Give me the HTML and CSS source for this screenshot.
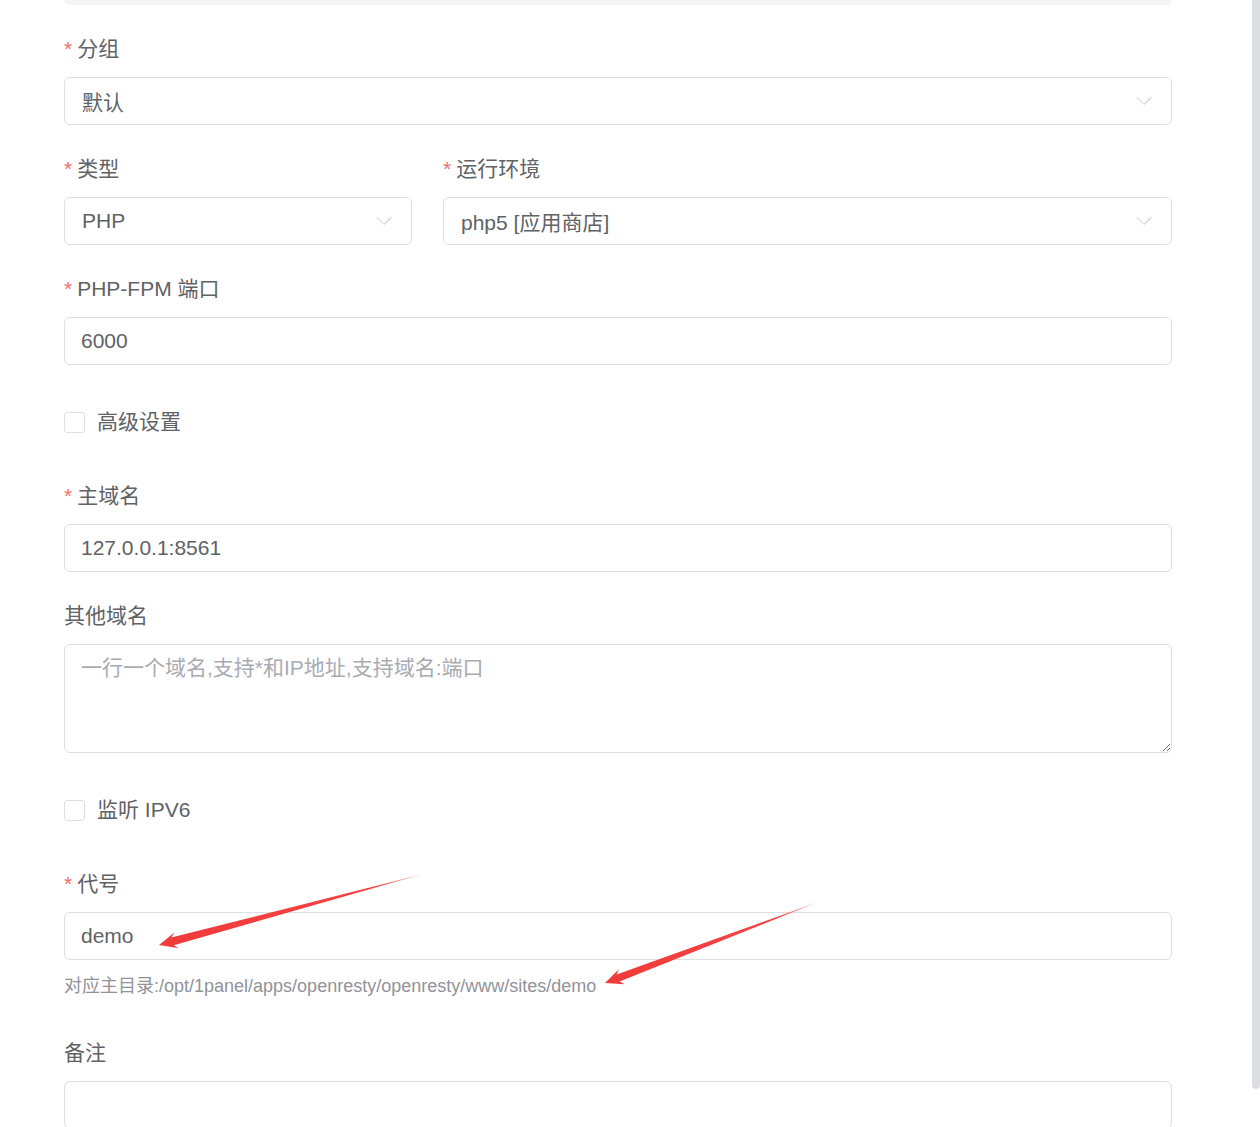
FILE: index.html
```html
<!DOCTYPE html>
<html lang="zh-CN">
<head>
<meta charset="utf-8">
<title>创建网站</title>
<link rel="stylesheet" href="styles.css">
</head>
<body>
<div class="page">
  <form class="form">
    <div class="prev-tail"></div>

    <div class="item">
      <div class="label req">分组</div>
      <div class="select"><span class="value">默认</span>
        <svg class="chev" viewBox="0 0 1024 1024"><path d="M831.872 340.864 512 652.672 192.128 340.864a10.88 10.88 0 0 0-15.104 0 10.24 10.24 0 0 0 0 14.72l329.6 321.28a14.4 14.4 0 0 0 19.84 0l329.6-321.28a10.24 10.24 0 0 0 0-14.72 10.88 10.88 0 0 0-15.104 0z"/></svg>
      </div>
    </div>

    <div class="row">
      <div class="item col-type">
        <div class="label req">类型</div>
        <div class="select"><span class="value">PHP</span>
          <svg class="chev" viewBox="0 0 1024 1024"><path d="M831.872 340.864 512 652.672 192.128 340.864a10.88 10.88 0 0 0-15.104 0 10.24 10.24 0 0 0 0 14.72l329.6 321.28a14.4 14.4 0 0 0 19.84 0l329.6-321.28a10.24 10.24 0 0 0 0-14.72 10.88 10.88 0 0 0-15.104 0z"/></svg>
        </div>
      </div>
      <div class="item col-env">
        <div class="label req">运行环境</div>
        <div class="select"><span class="value">php5 [应用商店]</span>
          <svg class="chev" viewBox="0 0 1024 1024"><path d="M831.872 340.864 512 652.672 192.128 340.864a10.88 10.88 0 0 0-15.104 0 10.24 10.24 0 0 0 0 14.72l329.6 321.28a14.4 14.4 0 0 0 19.84 0l329.6-321.28a10.24 10.24 0 0 0 0-14.72 10.88 10.88 0 0 0-15.104 0z"/></svg>
        </div>
      </div>
    </div>

    <div class="item">
      <div class="label req">PHP-FPM 端口</div>
      <input class="input" type="text" value="6000">
    </div>

    <div class="item check-item">
      <label class="checkbox"><span class="box"></span><span class="check-text">高级设置</span></label>
    </div>

    <div class="item">
      <div class="label req">主域名</div>
      <input class="input" type="text" value="127.0.0.1:8561">
    </div>

    <div class="item">
      <div class="label">其他域名</div>
      <textarea class="textarea" placeholder="一行一个域名,支持*和IP地址,支持域名:端口"></textarea>
    </div>

    <div class="item check-item">
      <label class="checkbox"><span class="box"></span><span class="check-text">监听 IPV6</span></label>
    </div>

    <div class="item item-help">
      <div class="label req">代号</div>
      <input class="input" type="text" value="demo">
      <div class="help">对应主目录:/opt/1panel/apps/openresty/openresty/www/sites/demo</div>
    </div>

    <div class="item">
      <div class="label">备注</div>
      <input class="input" type="text" value="">
    </div>
  </form>

  <svg class="arrows" viewBox="0 0 1260 1127" width="1260" height="1127">
    <defs>
      <linearGradient id="g1" x1="159" y1="945" x2="423" y2="874" gradientUnits="userSpaceOnUse">
        <stop offset="0" stop-color="#f23b3b"/>
        <stop offset="0.8" stop-color="#f24343"/>
        <stop offset="1" stop-color="#f9a0a0"/>
      </linearGradient>
      <linearGradient id="g2" x1="605" y1="983" x2="818" y2="902" gradientUnits="userSpaceOnUse">
        <stop offset="0" stop-color="#f23b3b"/>
        <stop offset="0.8" stop-color="#f24343"/>
        <stop offset="1" stop-color="#f9a0a0"/>
      </linearGradient>
    </defs>
    <polygon fill="url(#g1)" points="159,945 174.4,932.6 171.3,937.6 423,874 173.8,945.2 178.6,948.2"/>
    <polygon fill="url(#g2)" points="605,983 618.8,969.2 616.6,974.5 818,902 619.6,981.5 624.8,984.2"/>
  </svg>

  <div class="scroll-thumb"></div>
</div>
</body>
</html>
```

FILE: styles.css
```css
html, body {
  margin: 0;
  padding: 0;
  background: #ffffff;
  overflow: hidden;
}

body {
  font-family: "Liberation Sans", Arial, "Noto Sans CJK SC", sans-serif;
  color: #606266;
}

.page {
  position: relative;
  width: 1260px;
  height: 1127px;
  overflow: hidden;
}

.form {
  margin: 0;
  padding: 0 88px 0 64px;
  display: flex;
  flex-direction: column;
}

.prev-tail {
  height: 5px;
  background: #f4f4f5;
  border-radius: 0 0 7px 7px;
  margin-bottom: 27px;
}

.item {
  display: flex;
  flex-direction: column;
  margin-bottom: 27px;
}

.row {
  display: flex;
  gap: 31px;
}

.col-type {
  width: 348px;
  flex: none;
}

.col-env {
  flex: 1;
}

.label {
  font-size: 21px;
  line-height: 33px;
  height: 33px;
  margin-bottom: 12px;
  color: #606266;
  white-space: nowrap;
}

.label.req::before {
  content: "*";
  color: #f56c6c;
  margin-right: 5px;
}

.select,
.input {
  box-sizing: border-box;
  height: 48px;
  border: 1px solid #dcdfe6;
  border-radius: 6px;
  background: #ffffff;
  font-family: inherit;
  font-size: 21px;
  color: #606266;
  padding: 0 16px;
  width: 100%;
  outline: none;
}

.select {
  display: flex;
  align-items: center;
  justify-content: space-between;
  padding: 0 16px 0 17px;
}

.input {
  display: block;
  margin: 0;
}

.value {
  white-space: nowrap;
}

.chev {
  width: 22px;
  height: 22px;
  fill: #a8abb2;
  flex: none;
}

.textarea {
  box-sizing: border-box;
  display: block;
  width: 100%;
  height: 109px;
  margin: 0;
  border: 1px solid #dcdfe6;
  border-radius: 6px;
  padding: 7px 16px;
  font-family: inherit;
  font-size: 21px;
  line-height: 31.5px;
  color: #606266;
  resize: vertical;
  outline: none;
}

.textarea::placeholder {
  color: #a8abb2;
}

.check-item {
  height: 60px;
  justify-content: center;
}

.checkbox {
  display: flex;
  align-items: center;
}

.box {
  box-sizing: border-box;
  width: 21px;
  height: 21px;
  border: 1px solid #dcdfe6;
  border-radius: 3px;
  background: #ffffff;
  flex: none;
}

.check-text {
  margin-left: 12px;
  font-size: 21px;
  line-height: 30px;
  color: #606266;
}

.help {
  margin-top: 13px;
  margin-bottom: 9px;
  font-size: 18px;
  line-height: 27px;
  color: #909399;
  white-space: nowrap;
}

.arrows {
  position: absolute;
  left: 0;
  top: 0;
  pointer-events: none;
}

.scroll-thumb {
  position: absolute;
  right: 0;
  top: 0;
  width: 8px;
  height: 1089px;
  background: #dddee1;
  border-radius: 0 0 4px 4px;
}
```
